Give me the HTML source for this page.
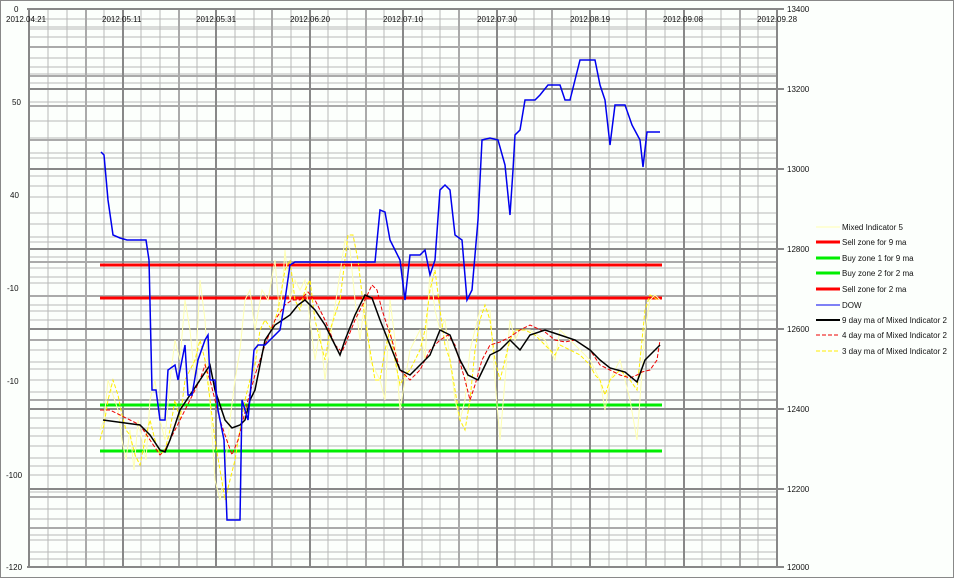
<!DOCTYPE html>
<html><head><meta charset="utf-8"><style>
html,body{margin:0;padding:0;background:#fff}
svg{display:block}
text{font-family:"Liberation Sans",sans-serif;font-size:8px;fill:#111}
</style></head><body>
<svg width="960" height="584" viewBox="0 0 960 584" xmlns="http://www.w3.org/2000/svg">
<rect x="0" y="0" width="960" height="584" fill="#fff"/>
<rect x="0.5" y="0.5" width="953" height="577" fill="#fcfffc" stroke="#888"/>
<g stroke="#b8b8b8" stroke-width="1" fill="none">
<path d="M29 19H777M29 27H777M29 29H777M29 37H777M29 47H777M29 58H777M29 67H777M29 74H777M29 83H777M29 102H777M29 106H777M29 121H777M29 138H777M29 140H777M29 153H777M29 158H777M29 176H777M29 186H777M29 197H777M29 213H777M29 224H777M29 237H777M29 242H777M29 257H777M29 262H777M29 268H777M29 277H777M29 283H777M29 296H777M29 305H777M29 311H777M29 320H777M29 340H777M29 350H777M29 362H777M29 369H777M29 380H777M29 392H777M29 400H777M29 418H777M29 428H777M29 436H777M29 446H777M29 458H777M29 466H777M29 475H777M29 492H777M29 497H777M29 509H777M29 519H777M29 528H777M29 535H777M29 540H777M29 552H777M29 559H777"/>
<path d="M48 9V567M67 9V567M86 9V567M104 9V567M141 9V567M160 9V567M179 9V567M197 9V567M235 9V567M254 9V567M272 9V567M291 9V567M328 9V567M347 9V567M366 9V567M384 9V567M422 9V567M440 9V567M459 9V567M478 9V567M515 9V567M534 9V567M552 9V567M571 9V567M609 9V567M627 9V567M646 9V567M665 9V567M702 9V567M721 9V567M740 9V567M758 9V567"/>
</g>
<g stroke="#aaa" stroke-width="2" fill="none">
<path d="M29 47H777M29 76H777M29 106H777M29 140H777M29 262H777M29 296H777M29 340H777M29 400H777M29 497H777M29 528H777"/>
<path d="M86 9V567M179 9V567M272 9V567M366 9V567M459 9V567M552 9V567M646 9V567M740 9V567"/>
</g>
<g stroke="#888" stroke-width="2" fill="none">
<path d="M29 89H777M29 169H777M29 249H777M29 329H777M29 409H777M29 489H777"/>
<path d="M123 9V567M216 9V567M310 9V567M403 9V567M497 9V567M590 9V567M684 9V567"/>
</g>
<g stroke="#888" stroke-width="2" fill="none">
<path d="M27 9H777V567H27M29 9V567"/>
<path d="M777 9H784M777 89H784M777 169H784M777 249H784M777 329H784M777 409H784M777 489H784M777 567H784"/>
</g>
<g>
<text x="14" y="12">0</text><text x="12" y="105">50</text><text x="10" y="198">40</text>
<text x="7" y="291">-10</text><text x="7" y="384">-10</text><text x="6" y="478">-100</text><text x="6" y="570">-120</text>
<text x="787" y="12">13400</text><text x="787" y="92">13200</text><text x="787" y="172">13000</text><text x="787" y="252">12800</text>
<text x="787" y="332">12600</text><text x="787" y="412">12400</text><text x="787" y="492">12200</text><text x="787" y="570">12000</text>
<g style="font-size:7.5px">
<text x="6" y="22">2012.04.21</text><text x="102" y="22">2012.05.11</text><text x="196" y="22">2012.05.31</text>
<text x="290" y="22">2012.06.20</text><text x="383" y="22">2012.07.10</text><text x="477" y="22">2012.07.30</text>
<text x="570" y="22">2012.08.19</text><text x="663" y="22">2012.09.08</text><text x="757" y="22">2012.09.28</text>
</g>
</g>
<g stroke-width="3">
<path d="M100 265H662M100 298H662" stroke="#f00"/>
<path d="M100 405H662M100 451H662" stroke="#0e0"/>
</g>
<g fill="none" stroke-width="1">
<polyline stroke="#ffffb0" points="100,430 104,420 108,380 113,395 118,410 122,440 126,460 130,430 134,470 138,420 142,440 146,460 150,400 155,380 160,420 165,440 170,380 175,340 180,360 185,300 190,330 195,380 200,280 205,320 210,400 215,480 220,500 225,470 230,420 235,380 240,350 245,300 250,290 255,330 262,290 268,300 275,260 280,320 285,250 290,300 295,280 300,290 305,280 310,320 315,360 320,330 325,380 330,340 345,240 350,250 355,300 360,340 365,300 370,360 380,380 385,400 390,300 395,340 400,410 405,380 410,350 420,330 425,360 430,270 435,310 440,330 445,320 450,360 455,400 460,420 465,400 470,350 475,330 480,310 490,310 495,380 500,440 505,380 510,320 515,340 520,330 530,330 545,340 555,360 560,330 570,340 580,350 590,360 600,380 605,410 610,380 615,370 620,360 630,400 637,440 645,330 650,300 655,295 660,300"/>
<polyline stroke="#ffee00" stroke-dasharray="4,2" points="100,440 104,425 108,400 113,380 118,395 122,415 126,430 130,435 135,455 140,465 145,440 150,420 155,440 160,455 165,450 170,430 175,400 180,420 185,380 190,370 195,360 200,340 205,360 210,400 215,440 220,470 225,500 230,480 235,460 240,430 245,400 250,380 255,365 260,330 265,320 272,330 278,310 285,270 290,260 295,300 300,310 305,290 310,280 315,320 320,340 325,360 330,330 340,300 348,235 353,235 358,260 365,320 370,350 375,380 380,380 385,350 390,330 395,360 400,385 405,375 410,370 420,350 425,330 430,290 435,270 440,310 445,345 450,360 455,390 460,420 465,430 470,400 475,350 480,320 485,305 490,320 495,360 500,380 505,360 510,340 515,330 525,330 535,335 545,345 555,355 560,345 570,350 580,355 590,365 595,375 600,380 605,395 610,380 620,370 630,380 637,390 645,310 650,295 658,300"/>
<polyline stroke="#e00" stroke-dasharray="4,2" points="100,410 110,410 120,415 130,420 140,425 150,440 160,455 165,450 170,440 180,420 190,400 200,380 205,365 210,380 215,400 220,420 225,435 232,455 238,440 243,420 248,400 255,375 265,345 275,320 285,305 292,300 300,300 308,292 315,300 325,320 335,345 342,352 347,340 355,320 365,300 372,285 377,290 382,310 392,340 400,370 410,380 420,370 430,350 440,340 448,335 455,345 465,380 470,400 475,385 482,360 490,345 500,342 510,337 520,330 530,325 545,332 555,340 565,342 575,340 590,350 600,365 610,370 620,375 630,378 637,375 642,372 650,370 657,360 660,340"/>
<polyline stroke="#000" stroke-width="1.5" points="103,420 140,425 150,435 160,450 165,452 170,440 180,410 190,395 200,380 210,365 215,390 225,420 232,428 240,425 245,420 250,400 255,390 265,340 275,325 290,315 298,305 305,300 315,310 325,325 335,345 340,355 345,340 355,315 365,295 372,298 380,320 390,345 400,370 410,375 420,365 430,355 440,330 450,335 460,360 468,375 478,380 490,355 500,350 510,340 520,350 530,335 545,330 560,335 575,340 590,350 600,360 610,368 625,372 637,382 645,360 660,345"/>
<polyline stroke="#0000ee" stroke-width="1.5" points="101,152 104,155 108,200 113,235 120,238 127,240 146,240 149,260 152,390 156,390 160,420 165,420 168,370 175,365 178,380 185,345 188,395 192,395 198,360 205,340 208,335 210,380 215,380 218,410 224,440 227,520 240,520 242,400 248,420 254,350 258,345 265,345 270,340 280,330 285,300 290,265 295,262 375,262 380,210 385,212 390,240 395,250 400,260 405,300 410,255 420,255 425,250 430,275 435,260 440,190 445,185 450,190 455,235 462,240 467,300 472,290 478,220 482,140 490,138 498,140 505,165 510,215 513,170 515,135 520,130 525,100 535,100 540,95 548,85 560,85 565,100 570,100 575,80 580,60 595,60 600,85 605,100 610,145 615,105 625,105 632,125 640,140 643,167 647,132 660,132"/>
</g>
<g>
<path d="M816 227H840" stroke="#ffffb0" stroke-width="1"/>
<path d="M816 242H840" stroke="#f00" stroke-width="3"/>
<path d="M816 258H840" stroke="#0e0" stroke-width="3"/>
<path d="M816 273H840" stroke="#0e0" stroke-width="3"/>
<path d="M816 289H840" stroke="#f00" stroke-width="3"/>
<path d="M816 305H840" stroke="#0000ee" stroke-width="1"/>
<path d="M816 320H840" stroke="#000" stroke-width="2"/>
<path d="M816 335H840" stroke="#e00" stroke-width="1" stroke-dasharray="4,2"/>
<path d="M816 351H840" stroke="#ffee00" stroke-width="1" stroke-dasharray="4,2"/>
<text x="842" y="230">Mixed Indicator 5</text>
<text x="842" y="245">Sell zone for 9 ma</text>
<text x="842" y="261">Buy zone 1 for 9 ma</text>
<text x="842" y="276">Buy zone 2 for 2 ma</text>
<text x="842" y="292">Sell zone for 2 ma</text>
<text x="842" y="308">DOW</text>
<text x="842" y="323">9 day ma of Mixed Indicator 2</text>
<text x="842" y="338">4 day ma of Mixed Indicator 2</text>
<text x="842" y="354">3 day ma of Mixed Indicator 2</text>
</g>
</svg>
</body></html>
